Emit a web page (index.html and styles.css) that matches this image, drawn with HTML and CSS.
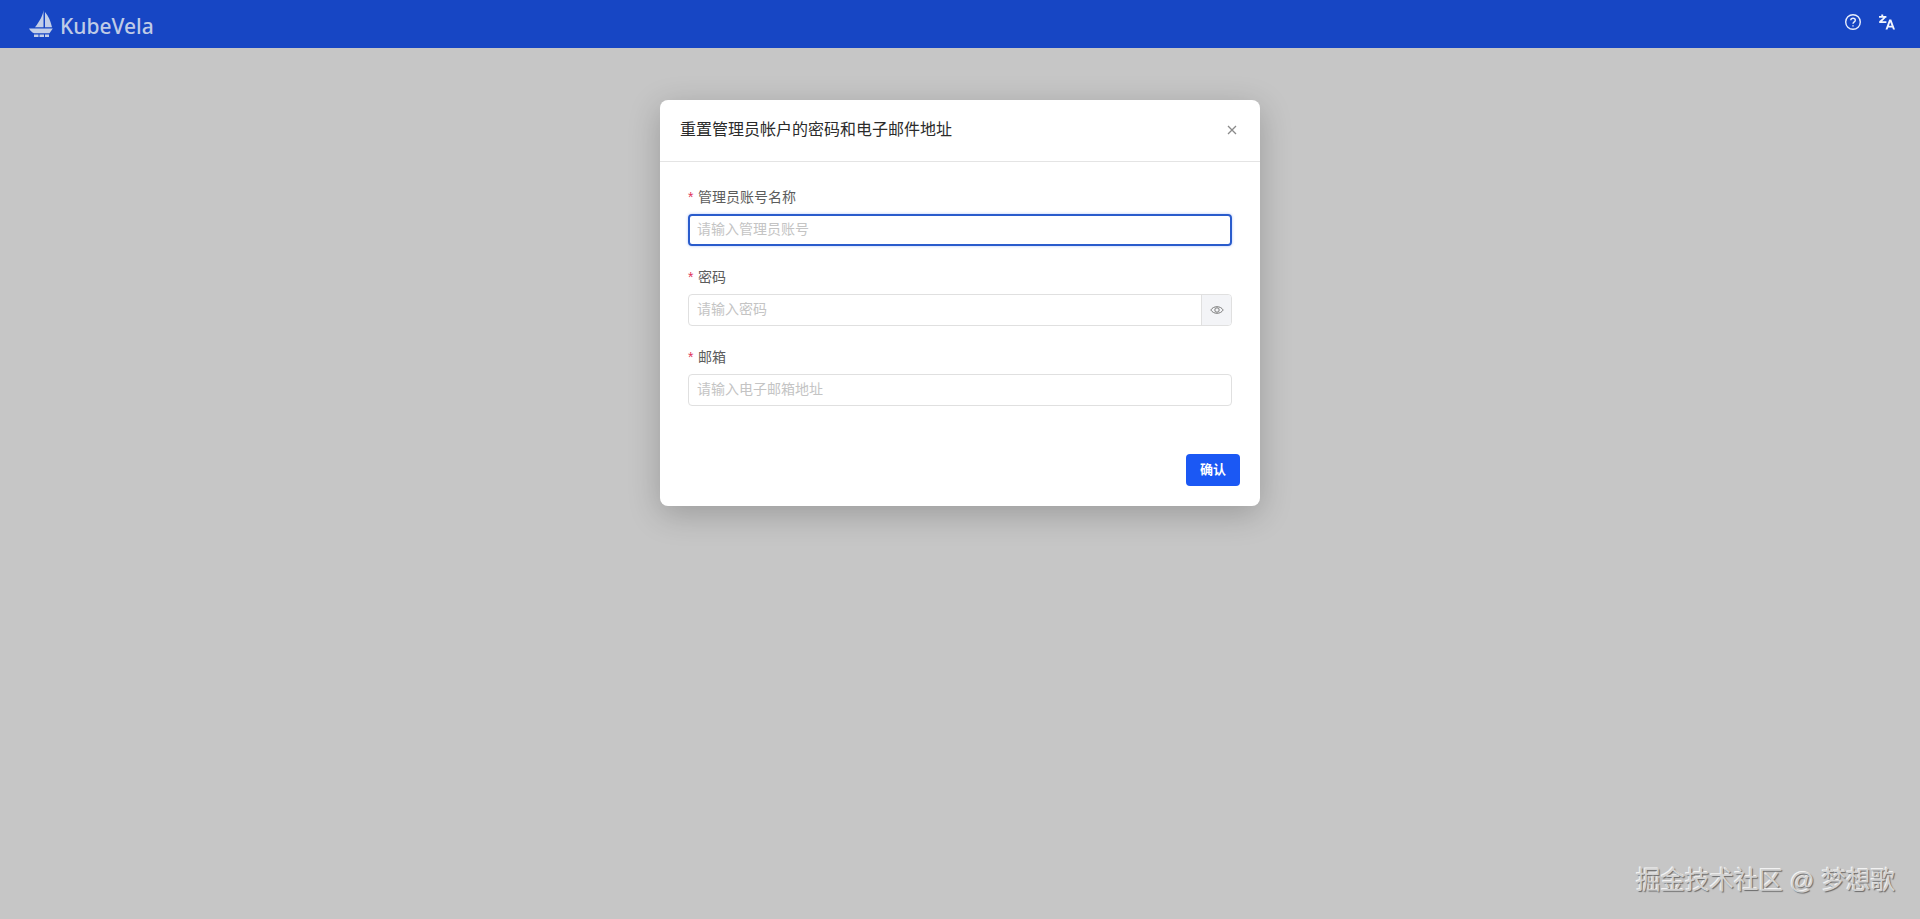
FILE: index.html
```html
<!DOCTYPE html>
<html lang="zh-CN">
<head>
    <meta charset="UTF-8">
    <title>KubeVela</title>
    <link rel="stylesheet" href="styles.css">
</head>
<body>
    <!-- Top bar -->
    <div class="navbar">
        <div class="logo">
            <svg class="logo-boat" width="24" height="28" viewBox="0 0 24 28">
                <path d="M14.500 0 C14 5 11 11 6 17.200 H14.500 Z"/>
                <path d="M16 2 C19.500 6 21.500 11 23 17.200 H16 Z"/>
                <path d="M0 18.500 H23.800 L20.500 23.200 H5 C3 22.500 1 20.500 0 18.500 Z"/>
                <path d="M5 24.500 H9.500 V27 H5 Z M10.500 24.500 H15 V27 H10.500 Z M16 24.500 H20 V27 H16 Z"/>
            </svg>
            <span class="logo-text">KubeVela</span>
        </div>
        <div class="nav-icons">
            <svg width="18" height="18" viewBox="0 0 18 18" fill="none" stroke="#e8eefc" stroke-width="1.400">
                <circle cx="9" cy="9" r="7.300"/>
                <path d="M6.800 7.200 C6.800 4.500 11.300 4.500 11.300 7.200 C11.300 8.900 9 8.800 9 10.800"/>
                <path d="M9 12.200 V13.600"/>
            </svg>
            <svg width="18" height="18" viewBox="0 0 18 18" fill="#f2f5fd">
                <path d="M3.300 1.500 H5.200 V3 H8.400 V4.800 H7.600 L4.200 8.200 H8.400 V10 H1.200 V8.200 L5.300 4.800 H1 V3 H3.300 Z"/>
                <path fill-rule="evenodd" d="M11.200 6.500 H13.300 L17 16.500 H15 L14.300 14.500 H10.200 L9.500 16.500 H7.500 Z M12.250 9.200 L10.900 12.800 H13.600 Z"/>
            </svg>
        </div>
    </div>

    <!-- Reset dialog -->
    <div class="dialog">
        <div class="dialog-header">
            <h2>重置管理员帐户的密码和电子邮件地址</h2>
            <svg class="close-icon" width="12" height="12" viewBox="0 0 12 12" fill="none" stroke="#8a8a8a" stroke-width="1.300">
                <path d="M2 2 L10 10 M10 2 L2 10"/>
            </svg>
        </div>
        <form class="dialog-body">
            <div class="form-item">
                <label><span class="required">*</span>管理员账号名称</label>
                <div class="input-box focused"><input type="text" placeholder="请输入管理员账号"></div>
            </div>
            <div class="form-item">
                <label><span class="required">*</span>密码</label>
                <div class="input-box">
                    <input type="text" placeholder="请输入密码">
                    <span class="addon">
                        <svg width="14" height="14" viewBox="0 0 14 14" fill="none" stroke="#7d7d7d" stroke-width="1">
                            <path d="M0.800 7 C3.500 2.600 10.500 2.600 13.200 7 C10.500 11.400 3.500 11.400 0.800 7 Z"/>
                            <circle cx="7" cy="7" r="2.200"/>
                        </svg>
                    </span>
                </div>
            </div>
            <div class="form-item">
                <label><span class="required">*</span>邮箱</label>
                <div class="input-box"><input type="text" placeholder="请输入电子邮箱地址"></div>
            </div>
        </form>
        <div class="dialog-footer">
            <button type="button">确认</button>
        </div>
    </div>

    <div class="watermark">掘金技术社区 @ 梦想歌</div>
</body>
</html>
```

FILE: styles.css
```css
body {
    margin: 0;
    height: 919px;
    overflow: hidden;
    display: flex;
    flex-direction: column;
    align-items: center;
    background-color: #c6c6c6;
    font-family: "Liberation Sans", "Noto Sans CJK SC", sans-serif;
}

/* Top bar */
.navbar {
    width: 100%;
    height: 48px;
    flex-shrink: 0;
    background-color: #1746c4;
    display: flex;
    justify-content: space-between;
    align-items: center;
}

.logo {
    display: flex;
    align-items: center;
    margin-left: 29px;
    gap: 7px;
}

.logo-boat {
    fill: #c3cfe8;
}

.logo-text {
    font-family: "Noto Sans", sans-serif;
    font-size: 21px;
    font-weight: 500;
    color: #bfcbe6;
    margin-top: 4px;
}

.nav-icons {
    display: flex;
    gap: 16px;
    margin-right: 24px;
    margin-top: -4px;
}

/* Dialog */
.dialog {
    width: 600px;
    height: 406px;
    margin-top: 52px;
    background-color: #fff;
    border-radius: 8px;
    box-shadow: 0 8px 32px rgba(0, 0, 0, 0.22);
    display: flex;
    flex-direction: column;
}

.dialog-header {
    height: 61px;
    border-bottom: 1px solid #e4e4e4;
    padding: 0 22px 0 20px;
    display: flex;
    justify-content: space-between;
    align-items: center;
}

.dialog-header h2 {
    margin: 0 0 6px;
    font-size: 16px;
    font-weight: 400;
    color: #2b2b2b;
}

.close-icon {
    margin-bottom: 2px;
}

.dialog-body {
    padding: 24px 28px 0;
    flex: 1;
}

.form-item {
    margin-bottom: 20px;
}

label {
    display: block;
    height: 22px;
    line-height: 22px;
    margin-bottom: 6px;
    font-size: 14px;
    color: #5c5c5c;
}

.required {
    color: #e0335a;
    margin-right: 4px;
    display: inline-block;
    width: 6px;
}

.input-box {
    height: 32px;
    box-sizing: border-box;
    border: 1px solid #e0e0e0;
    border-radius: 4px;
    display: flex;
    overflow: hidden;
}

.input-box.focused {
    border: 2px solid #2a5ccc;
    box-shadow: 0 0 3px rgba(27, 88, 244, 0.35);
    overflow: visible;
}

.input-box input {
    flex: 1;
    min-width: 0;
    border: none;
    outline: none;
    padding: 0 8px 2px;
    font-size: 14px;
    font-family: inherit;
    background: transparent;
}

.input-box.focused input {
    padding: 0 7px 2px;
}

.input-box input::placeholder {
    color: #c4c4c4;
}

.addon {
    width: 30px;
    box-sizing: border-box;
    background-color: #f3f4f7;
    border-left: 1px solid #e0e0e0;
    display: flex;
    align-items: center;
    justify-content: center;
}

.dialog-footer {
    display: flex;
    justify-content: flex-end;
    padding: 0 20px 20px;
}

button {
    width: 54px;
    height: 32px;
    border: none;
    border-radius: 4px;
    padding: 0 0 3px;
    background-color: #1b58f4;
    color: #fff;
    font-size: 13px;
    font-weight: 700;
    font-family: inherit;
}

/* Watermark stuck on the screenshot */
.watermark {
    position: absolute;
    right: 25px;
    bottom: 21px;
    font-size: 24.500px;
    line-height: 34px;
    color: #d2d2d2;
    text-shadow: 1px 1px 1px #6a6a6a, -1px -1px 0 #f2f2f2;
}
```
